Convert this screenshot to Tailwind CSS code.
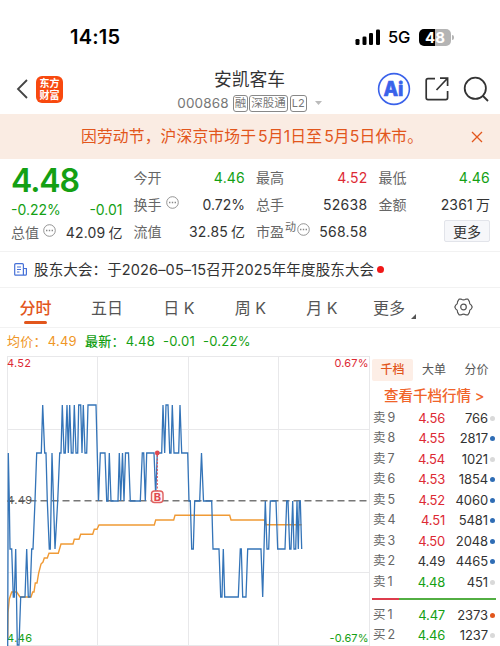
<!DOCTYPE html>
<html lang="zh-CN">
  <head>
    <meta charset="UTF-8" />
    <meta name="viewport" content="width=device-width, initial-scale=1.0" />
    <title>安凯客车 000868</title>
    <script src="https://cdn.jsdelivr.net/npm/@tailwindcss/browser@4"></script>
  </head>
  <body
    class="w-[500px] h-[646px] overflow-hidden bg-white text-[#333] font-[Inter,'Noto_Sans_CJK_SC',sans-serif] whitespace-nowrap"
  >
    <!-- Status bar -->
    <div class="flex items-center h-[60px] pt-[14px] pl-[70px] pr-[46px]">
      <span class="text-[20px] tracking-[0.2px] font-semibold text-black">14:15</span>
      <div class="ml-auto flex items-center">
        <svg class="w-[26px] h-4" viewBox="0 0 26 16">
          <rect x="0.5" y="10" width="4" height="6" rx="1.3" />
          <rect x="7.5" y="7.5" width="4" height="8.5" rx="1.3" />
          <rect x="14" y="4" width="4" height="12" rx="1.3" />
          <rect x="21" y="0.5" width="4" height="15.5" rx="1.3" />
        </svg>
        <span class="ml-[7px] w-[22px] text-[16.5px] tracking-[-0.3px] font-medium text-black">5G</span>
        <div
          class="ml-[9px] flex items-center justify-center w-8 h-[17px] rounded-[5px] bg-linear-to-r from-black from-50% to-[#b4b4b4] to-50% text-white text-[15px] font-bold leading-none"
        >
          48
        </div>
        <div class="ml-px w-[2px] h-[5px] rounded-r bg-[#b4b4b4]"></div>
      </div>
    </div>

    <!-- Header -->
    <div class="flex h-[54px]">
      <div class="flex w-[170px] items-center pl-4 pt-1">
        <svg class="w-3 h-5" viewBox="0 0 12 20" fill="none" stroke="#444" stroke-width="1.8">
          <path d="M11 1 L2 10 L11 19" />
        </svg>
        <div
          class="ml-2 flex flex-col items-center justify-center w-[27px] h-[27px] rounded-[6px] bg-[#f8490f] text-white text-[10px] leading-[12px] font-bold font-['Noto_Sans_CJK_SC',sans-serif]"
        >
          <span>东方</span>
          <span>财富</span>
        </div>
      </div>
      <div class="w-[158px] flex flex-col items-center">
        <div class="mt-[8px] pl-px text-[17.8px] leading-6">安凯客车</div>
        <div class="flex items-center h-[22px] pl-[1px] text-[#777]">
          <span class="text-[13.5px] tracking-[0.15px]">000868</span>
          <span class="ml-1 px-px h-[17px] leading-[15px] rounded-[3px] border border-[#888] text-[11.5px]">融</span>
          <span class="ml-px px-px h-[17px] leading-[15px] rounded-[3px] border border-[#888] text-[11.5px]">深股通</span>
          <span class="ml-0.5 px-px h-[17px] leading-[15px] rounded-[3px] border border-[#888] text-[11px]">L2</span>
          <svg class="ml-2 w-[7px] h-1" viewBox="0 0 7 4"><path d="M0 0 H7 L3.5 4 Z" fill="#bbb" /></svg>
        </div>
      </div>
      <div class="ml-auto flex items-center gap-[14px] pr-[11px] pt-1">
        <svg class="w-[34px] h-[34px]" viewBox="0 0 34 34">
          <circle cx="17" cy="17" r="15.4" fill="none" stroke="#3a62ea" stroke-width="1.6" />
          <text x="6.5" y="24" font-size="19.500" font-weight="800" fill="#3a62ea" stroke="#3a62ea" stroke-width="0.6" textLength="20" lengthAdjust="spacingAndGlyphs">Ai</text>
        </svg>
        <svg class="w-6 h-6" viewBox="0 0 24 24" fill="none" stroke="#333" stroke-width="1.7">
          <path d="M10 1.7 H3 Q1.2 1.7 1.2 3.5 V20.8 Q1.2 22.6 3 22.6 H20.8 Q22.6 22.6 22.6 20.8 V14" />
          <path d="M15 1.2 H22.6 V9 M22.3 1.5 L11.5 13" />
        </svg>
        <svg class="w-[26px] h-[26px]" viewBox="0 0 26 26" fill="none" stroke="#333" stroke-width="1.8">
          <circle cx="12.3" cy="12.3" r="10.6" />
          <path d="M19.5 19.5 L25 25" />
        </svg>
      </div>
    </div>

    <!-- Holiday notice -->
    <div class="flex items-center h-[45px] bg-[#faece3] text-[#e2561c]">
      <span class="w-[430px] pt-px pl-[81px] text-[15.8px] tracking-[0.12px]">因劳动节，沪深京市场于<span class="pl-[2px]"></span>5月1日至<span class="pl-[2px]"></span>5月5日休市。</span>
      <svg class="ml-auto mr-[17px] w-3 h-3" viewBox="0 0 12 12" stroke="#e2561c" stroke-width="1.3">
        <path d="M1 1 L11 11 M11 1 L1 11" />
      </svg>
    </div>

    <!-- Quote summary -->
    <div class="grid grid-cols-4 gap-x-[11px] h-[92px] pl-[11px] pr-[10px] pt-[5px] text-[14px] text-[#666]">
      <div class="flex flex-col">
        <div class="h-[32px] text-[32px] leading-[34px] tracking-[-1.1px] font-semibold text-[#14a014]">4.48</div>
        <div class="flex justify-between h-[26px] leading-[27px] text-[#14a014]">
          <span>-0.22%</span><span>-0.01</span>
        </div>
        <div class="flex items-center h-5">
          <span>总值</span>
          <svg class="ml-1 mb-1 w-[13px] h-[13px]" viewBox="0 0 13 13" fill="none" stroke="#888">
            <circle cx="6.5" cy="6.5" r="5.8" stroke-width="0.9" />
            <path d="M3 6.5 h1.4 M5.8 6.5 h1.4 M8.6 6.5 h1.4" stroke-width="1.3" />
          </svg>
          <span class="ml-auto text-[#333] tracking-[0.2px]">42.09<span class="pl-[3px] tracking-normal">亿</span></span>
        </div>
      </div>
      <div class="flex flex-col">
        <div class="flex items-center h-[27px] justify-between"><span>今开</span><span class="text-[#14a014] tracking-[0.2px]">4.46</span></div>
        <div class="flex items-center h-[27px]">
          <span>换手</span>
          <svg class="ml-1 mb-1 w-[13px] h-[13px]" viewBox="0 0 13 13" fill="none" stroke="#888">
            <circle cx="6.5" cy="6.5" r="5.8" stroke-width="0.9" />
            <path d="M3 6.5 h1.4 M5.8 6.5 h1.4 M8.6 6.5 h1.4" stroke-width="1.3" />
          </svg>
          <span class="ml-auto text-[#333]">0.72%</span>
        </div>
        <div class="flex items-center h-[27px] justify-between"><span>流值</span><span class="text-[#333] tracking-[0.2px]">32.85<span class="pl-[3px] tracking-normal">亿</span></span></div>
      </div>
      <div class="flex flex-col">
        <div class="flex items-center h-[27px] justify-between"><span>最高</span><span class="text-[#dd2a34] tracking-[0.2px]">4.52</span></div>
        <div class="flex items-center h-[27px] justify-between"><span>总手</span><span class="text-[#333] tracking-[0.3px]">52638</span></div>
        <div class="flex items-center h-[27px]">
          <span>市盈</span>
          <span class="mb-2 ml-px text-[11px]">动</span>
          <svg class="mb-1 ml-px w-[13px] h-[13px]" viewBox="0 0 13 13" fill="none" stroke="#888">
            <circle cx="6.5" cy="6.5" r="5.8" stroke-width="0.9" />
            <path d="M3 6.5 h1.4 M5.8 6.5 h1.4 M8.6 6.5 h1.4" stroke-width="1.3" />
          </svg>
          <span class="ml-auto text-[#333] tracking-[0.3px]">568.58</span>
        </div>
      </div>
      <div class="flex flex-col">
        <div class="flex items-center h-[27px] justify-between"><span>最低</span><span class="text-[#14a014] tracking-[0.2px]">4.46</span></div>
        <div class="flex items-center h-[27px] justify-between"><span>金额</span><span class="text-[#333] tracking-[0.2px]">2361<span class="pl-[3px] tracking-normal">万</span></span></div>
        <div class="self-end mt-[2px] flex items-center justify-center w-[46px] h-[22px] rounded-[2px] border border-[#e2e4ea] bg-[#f6f7fa] text-[#333]">更多</div>
      </div>
    </div>

    <!-- News -->
    <div class="flex items-center h-9 border-t border-[#f2f2f2] pl-[14px]">
      <svg class="w-[13px] h-[13px]" viewBox="0 0 13 13" fill="none" stroke="#4671d8" stroke-width="1.2">
        <path d="M9.4 12.2 H1.8 Q0.7 12.2 0.7 11.2 V1.7 Q0.7 0.7 1.8 0.7 H8.4 Q9.4 0.7 9.4 1.7 V12.2 H11.4 Q12.4 12.2 12.4 11.2 V5.5 H9.4" />
        <path d="M3 4 H7 M3 6.5 H7 M3 9 H5.5" />
      </svg>
      <span class="ml-[7px] text-[14.5px] tracking-[0.14px]">股东大会：于2026–05–15召开2025年年度股东大会</span>
      <span class="ml-[3px] w-[7px] h-[7px] rounded-full bg-[#f01818]"></span>
    </div>

    <!-- Period tabs -->
    <div class="flex h-[41px] border-y border-[#f2f2f2] text-[16px] text-[#555]">
      <div class="flex flex-col items-center w-[71px] pt-[8px] text-[#e2561c]">
        <span class="leading-6 font-medium">分时</span>
        <span class="mt-[1px] w-[23px] h-[3px] rounded-full bg-[#e2561c]"></span>
      </div>
      <div class="w-[72px] pt-[8px] text-center leading-6">五日</div>
      <div class="w-[72px] pt-[8px] text-center leading-6">日 K</div>
      <div class="w-[71px] pt-[8px] text-center leading-6">周 K</div>
      <div class="w-[72px] pt-[8px] text-center leading-6">月 K</div>
      <div class="flex items-end w-[72px] pl-[15px] pb-[7px] leading-6">
        更多
        <svg class="ml-[6px] mb-[1px] w-[5px] h-[5px]" viewBox="0 0 5 5"><path d="M5 0 V5 H0 Z" fill="#555" /></svg>
      </div>
      <svg class="ml-[24px] mt-[10px] w-[19px] h-[18px]" viewBox="0 0 19 18" fill="none" stroke="#555" stroke-width="1.2" stroke-linejoin="round">
        <path d="M5 1.2 L7.3 1.2 Q9.5 2.6 11.7 1.2 L14 1.2 L15.4 3.6 Q15.2 6.2 17.2 7 L18.2 9 L17.2 11 Q15.2 11.8 15.4 14.4 L14 16.8 L11.7 16.8 Q9.5 15.4 7.3 16.8 L5 16.8 L3.6 14.4 Q3.8 11.8 1.8 11 L0.8 9 L1.8 7 Q3.8 6.2 3.6 3.6 Z" />
        <circle cx="9.5" cy="9" r="2.8" />
      </svg>
    </div>

    <!-- Legend -->
    <div class="flex items-center h-7 pl-[7px] text-[13px] tracking-[0.25px] text-[#14a014]">
      <span class="w-[78px] text-[#ef9626]">均价：<span class="pl-px">4.49</span></span>
      <span class="w-[78px]"><span class="font-medium">最新</span>：<span class="pl-px">4.48</span></span>
      <span class="w-[40px]">-0.01</span>
      <span>-0.22%</span>
    </div>

    <!-- Chart and order book -->
    <div class="flex h-[290px]">
      <svg class="shrink-0 w-[370px] h-[290px]" viewBox="0 356 370 290" fill="none">
        <path d="M7.5 356.5 H369.5 M7.5 429.5 H369.5 M7.5 572.5 H369.5 M7.5 645.5 H369.5" stroke="#e8e8ea" />
        <path d="M7.5 356 V646 M97.5 356 V646 M188.5 356 V646 M278.5 356 V646 M369.5 356 V646" stroke="#e8e8ea" />
        <path d="M7.5 500.8 H369" stroke="#777" stroke-width="1.5" stroke-dasharray="7 4" />
        <g font-size="11">
          <text x="7" y="367" fill="#dd2a34" textLength="24">4.52</text>
          <text x="7" y="504" fill="#555" textLength="25">4.49</text>
          <text x="7" y="642" fill="#14a014" textLength="25">4.46</text>
          <text x="334.500" y="367" fill="#dd2a34" textLength="34">0.67%</text>
          <text x="329.500" y="641.500" fill="#14a014" textLength="39">-0.67%</text>
        </g>
        <!-- average price -->
        <polyline
          stroke="#f09a35"
          stroke-width="1.4"
          points="7.7,638 8,613 9.300,599 11.700,592 16.700,592 20,597 31,597 32.700,592 34,592 35.300,583 37,583 38.700,573 41,564 43,562 44.300,558 47.300,558 49,553.300 58.300,553.300 61,544 73,544 74.300,539.300 79,539.300 80.700,534.300 92.700,534.300 94.300,529.300 97,529.300 99,525 154.300,525 155.700,520 173.700,520 175,515.300 229.700,515.300 231,520 264.300,520 266,524.700 301.700,524.700"
        />
        <!-- last price -->
        <polyline
          stroke="#3474b8"
          stroke-width="1.3"
          points="7.7,646 8.300,453 9.300,501 10,549 11.700,549 13.300,597 14.300,597 15.700,549 17.300,645 19,645 20.700,597 25,597 26.700,549 28.300,597 30,597 31.700,549 33,549 35,501 36.700,453 41.300,453 42.700,405 44.700,453 46,453 47.300,501 49.300,549 50.300,549 52,453 55,549 57.700,501 59.700,453 61,453 62.300,405 64,453 65.300,453 67,405 68.300,453 69.700,405 71.300,453 73,453 74.300,405 76,453 77.700,453 78.700,405 80.700,405 82,453 83.300,405 85,453 86.700,453 88,405 96,405 98.500,501 100.300,453 105,453 106.700,501 108,501 109.300,453 111,501 118,501 119.300,453 120.700,501 122.500,453 124,501 125.500,453 128.500,453 130.300,501 140.300,501 142.300,453 143.700,453 145.300,501 146.700,453 154,453 155.700,495 157.300,453 161.700,453 163,405 164.700,453 166,405 168,405 169.700,453 171,453 172.300,405 174,453 178.700,453 180,405 181.700,453 187.700,453 189,501 190.300,501 191.700,549 193.300,549 194.700,501 199.700,501 201.500,453 203.500,501 211.700,501 213,549 219,549 220.700,597 222,597 223.300,549 224.700,597 238.300,597 240.300,549 241.300,549 242.700,597 246,597 247.700,549 261,549 262.700,597 265.300,501 267,549 268.700,549 270.300,501 276,501 277.700,549 285,549 286.700,501 288,501 289.700,549 291,549 292.700,501 294,549 295.700,549 297,501 298.300,549 299.300,501 300.300,501 301.700,549"
        />
        <!-- buy marker -->
        <path d="M157.300 455 V491" stroke="#e0484f" stroke-dasharray="2 1.5" />
        <circle cx="157.300" cy="453" r="2.400" fill="#e0484f" />
        <rect x="151.500" y="491" width="11.500" height="11.500" rx="3" fill="#fff3f3" stroke="#e0605f" stroke-width="1.400" />
        <text x="157.300" y="500.700" text-anchor="middle" font-size="11" font-weight="700" fill="#e0484f">B</text>
      </svg>

      <div class="flex flex-col w-[130px] text-[13px]">
        <div class="flex items-center h-[22px] mt-[3px] pl-[2px] text-[12px] text-[#555]">
          <span class="w-[41px] h-[22px] leading-[21px] text-center rounded-[2px] bg-[#fdeee6] text-[#e2561c] font-medium">千档</span>
          <span class="w-[42px] text-center">大单</span>
          <span class="w-[43px] text-center">分价</span>
        </div>
        <div class="h-[27px] leading-[30px] pl-[14px] text-[14.5px] text-[#f0642a] font-medium">查看千档行情 &gt;</div>
        <div id="sells" class="flex flex-col pl-[3px] pr-1"></div>
        <div class="flex h-[3px] my-[5px] ml-[2px] mr-[4px]">
          <span class="w-[27px] bg-[#dd3c4c]"></span>
          <span class="grow bg-[#52ae42]"></span>
        </div>
        <div id="buys" class="flex flex-col pl-[3px] pr-1"></div>
      </div>
    </div>

    <script>
      const RED = "text-[#dd2a34]";
      const GREEN = "text-[#14a014]";
      const FLAT = "text-[#333]";
      const dots = { grey: "bg-[#d9d9d9]", blue: "bg-[#2f6db5]", orange: "bg-[#e2561c]" };

      const sells = [
        ["卖9", "4.56", RED, "766", "grey"],
        ["卖8", "4.55", RED, "2817", "blue"],
        ["卖7", "4.54", RED, "1021", "grey"],
        ["卖6", "4.53", RED, "1854", "blue"],
        ["卖5", "4.52", RED, "4060", "blue"],
        ["卖4", "4.51", RED, "5481", "blue"],
        ["卖3", "4.50", RED, "2048", "blue"],
        ["卖2", "4.49", FLAT, "4465", "blue"],
        ["卖1", "4.48", GREEN, "451", "grey"],
      ];
      const buys = [
        ["买1", "4.47", GREEN, "2373", "orange"],
        ["买2", "4.46", GREEN, "1237", "grey"],
      ];

      const renderRows = (id, rows) => {
        document.getElementById(id).innerHTML = rows
          .map(
            ([label, price, color, volume, dot]) => `
            <div class="flex items-center h-[20.5px]">
              <span class="w-[26px] text-[12.5px] text-[#666]">${label[0]}<span class="pl-[2px]">${label[1]}</span></span>
              <span class="w-[46px] text-right tracking-[-0.2px] ${color}">${price}</span>
              <span class="w-[43px] text-right tracking-[-0.1px]">${volume}</span>
              <span class="ml-[2px] w-[5px] h-[5px] rounded-full ${dots[dot]}"></span>
            </div>`
          )
          .join("");
      };

      renderRows("sells", sells);
      renderRows("buys", buys);
    </script>
  </body>
</html>
